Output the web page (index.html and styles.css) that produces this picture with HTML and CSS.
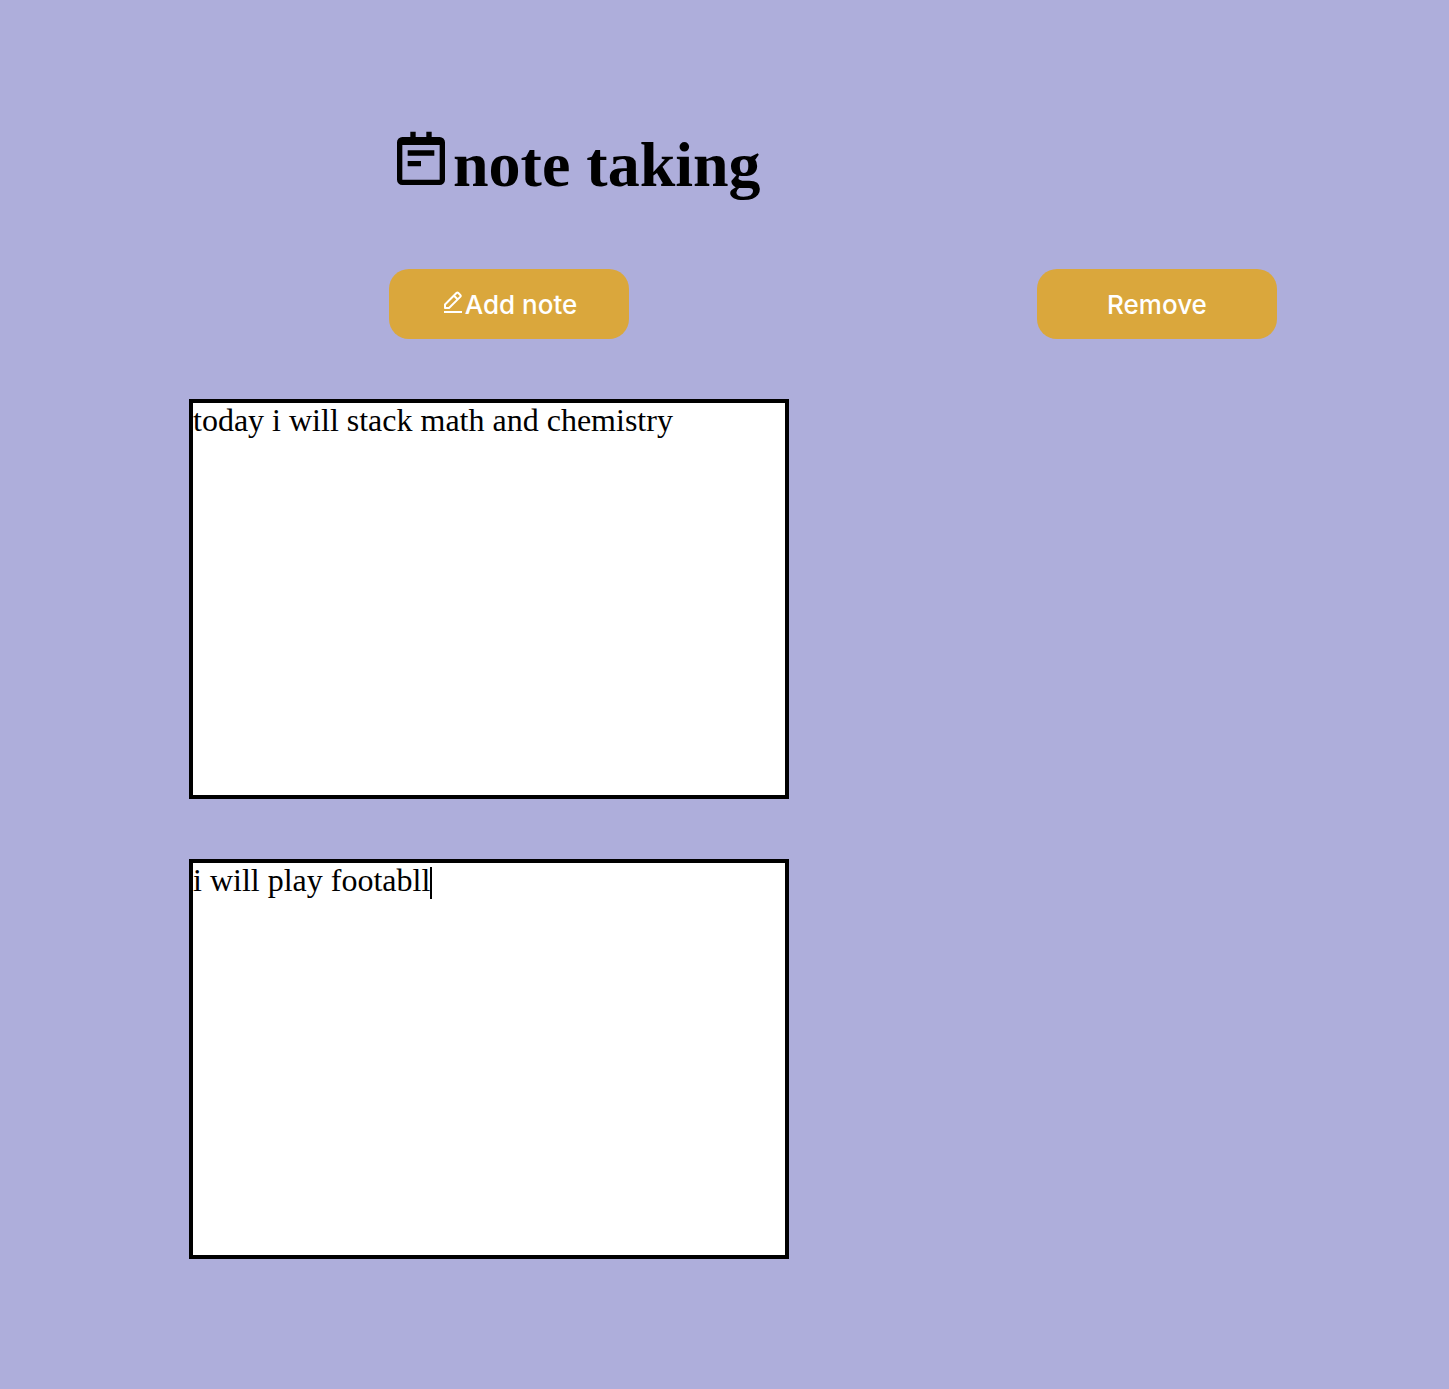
FILE: index.html
```html
<!DOCTYPE html>
<html lang="en">
<head>
<meta charset="utf-8">
<title>note taking</title>
<meta name="viewport" content="width=device-width, initial-scale=1">
<link rel="stylesheet" href="styles.css">
</head>
<body>
<main class="page">
  <header class="header">
    <h1 class="title">
      <svg class="title-icon" viewBox="0 0 24 24" fill="currentColor" aria-hidden="true">
        <path fill-rule="evenodd" d="M8 1h2v2h4V1h2v2h3a2 2 0 0 1 2 2v14a2 2 0 0 1-2 2H5a2 2 0 0 1-2-2V5a2 2 0 0 1 2-2h3zM5 6v13h14V6z"/>
        <path d="M7 8h10v2H7zM7 12h5v2H7z"/>
      </svg>note taking
    </h1>
    <div class="actions">
      <button class="button" type="button">
        <svg class="button-icon" viewBox="0 0 24 24" fill="none" stroke="currentColor" stroke-width="2" aria-hidden="true">
          <path stroke-linejoin="round" d="M4 14.5 15.7 2.8a1 1 0 0 1 1.4 0l2.4 2.4a1 1 0 0 1 0 1.4L8 18H4zM13 5.7l3.8 3.8"/>
          <path d="M3 22h18"/>
        </svg>Add note
      </button>
      <button class="button" type="button">Remove</button>
    </div>
  </header>
  <section class="notes" aria-label="Notes">
    <div class="note">
      <textarea class="note-text" aria-label="Note 1" spellcheck="false">today i will stack math and chemistry</textarea>
    </div>
    <div class="note">
      <textarea class="note-text" aria-label="Note 2" spellcheck="false">i will play footabll</textarea>
      <span class="caret"></span>
    </div>
  </section>
</main>
</body>
</html>
```
FILE: styles.css
```css
* {
  box-sizing: border-box;
}

body {
  margin: 0;
  min-height: 100vh;
  background: #aeaedb;
  color: #000;
  font-family: "Liberation Serif", "Times New Roman", serif;
}

.page {
  display: flex;
  flex-direction: column;
  gap: 60px;
  padding: 127px 172px 128px 189px;
}

.header {
  display: flex;
  flex-direction: column;
  gap: 66px;
  padding-left: 200px;
}

.title {
  display: flex;
  align-items: center;
  margin: 0;
  font-size: 64px;
  line-height: 76px;
}

.title-icon {
  width: 64px;
  height: 64px;
  margin-bottom: 8px;
}

.actions {
  display: flex;
  flex-wrap: wrap;
  justify-content: space-between;
  gap: 20px;
}

.button {
  display: flex;
  align-items: center;
  justify-content: center;
  width: 240px;
  height: 70px;
  padding: 2px 0 0;
  border: 0;
  border-radius: 20px;
  background: #daa73c;
  color: #fff;
  font: 500 26px/32px Inter, sans-serif;
  cursor: pointer;
}

.button-icon {
  width: 24px;
  height: 24px;
  margin-bottom: 6px;
}

.notes {
  display: flex;
  flex-direction: column;
  gap: 60px;
}

.note {
  position: relative;
  width: 100%;
  max-width: 600px;
}

.note-text {
  display: block;
  width: 100%;
  height: 400px;
  padding: 0;
  border: 4px solid #000;
  border-radius: 0;
  outline: 0;
  background: #fff;
  color: #000;
  font: 32px/34px "Liberation Serif", "Times New Roman", serif;
  resize: none;
}

.caret {
  position: absolute;
  top: 8px;
  left: 241px;
  width: 2px;
  height: 32px;
  background: #000;
}
```
